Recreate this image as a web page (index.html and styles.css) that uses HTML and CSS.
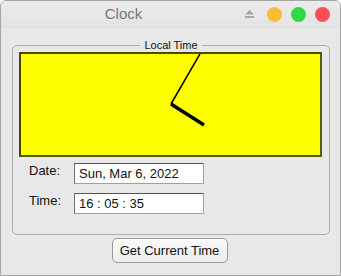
FILE: index.html
```html
<!DOCTYPE html>
<html lang="en">
<head>
    <meta charset="UTF-8">
    <title>Clock</title>
    <link rel="stylesheet" href="styles.css">
</head>
<body>
    <div class="window">
        <div class="titlebar">
            <div class="title">Clock</div>
            <div class="controls">
                <svg class="eject" width="9" height="8" viewBox="0 0 9 8">
                    <polygon points="4.5,0 9,4.5 0,4.5" fill="#a8a8a8"/>
                    <rect x="0" y="6" width="9" height="2" fill="#a8a8a8"/>
                </svg>
                <span class="dot yellow"></span>
                <span class="dot green"></span>
                <span class="dot red"></span>
            </div>
        </div>

        <div class="content">
            <fieldset class="group">
                <legend>Local Time</legend>
                <div class="clock-panel">
                    <svg width="299" height="101" viewBox="0 0 299 101">
                        <line x1="150" y1="50" x2="179.5" y2="-1" stroke="#000" stroke-width="1.5"/>
                        <line x1="150" y1="50" x2="183" y2="71" stroke="#000" stroke-width="3.5"/>
                    </svg>
                </div>
                <div class="row">
                    <label>Date:</label>
                    <div class="field">Sun, Mar 6, 2022</div>
                </div>
                <div class="row">
                    <label>Time:</label>
                    <div class="field">16 : 05 : 35</div>
                </div>
            </fieldset>
            <div class="actions">
                <button class="btn">Get Current Time</button>
            </div>
        </div>
    </div>
</body>
</html>
```

FILE: styles.css
```css
* {
    margin: 0;
    padding: 0;
    box-sizing: border-box;
}

body {
    font-family: 'Liberation Sans', Arial, sans-serif;
    background: #ffffff;
}

.window {
    width: 341px;
    height: 276px;
    border: 1px solid #a4a4a4;
    border-radius: 6px 6px 0 0;
    background: #e8e8e8;
    overflow: hidden;
}

.titlebar {
    height: 27px;
    display: flex;
    align-items: center;
    background: linear-gradient(#ececec, #e3e3e3);
    border-bottom: 1px solid #dedede;
}

.title {
    flex: 1;
    text-align: center;
    font-size: 15px;
    color: #777;
    padding-bottom: 1px;
    padding-left: 1px;
}

.controls {
    display: flex;
    align-items: center;
    gap: 9px;
    padding-right: 10px;
}

.eject {
    margin-right: 4px;
}

.dot {
    width: 15px;
    height: 15px;
    border-radius: 50%;
}

.yellow { background: #fbbd33; }
.green { background: #33d845; }
.red { background: #f65158; }

.content {
    padding: 11px 10px 0 11px;
}

.group {
    height: 196px;
    border: 1px solid #adadad;
    border-radius: 5px;
    padding: 1px 6px 0 6px;
}

.group legend {
    margin: 0 auto;
    padding: 0 4px;
    font-size: 11px;
    color: #111;
}

.clock-panel {
    width: 303px;
    height: 105px;
    background: #ffff00;
    border: 2px solid #4a4a00;
    border-right-color: #5c5c10;
    border-bottom-color: #5c5c10;
}

.clock-panel svg {
    display: block;
}

.row {
    display: flex;
    align-items: flex-start;
    margin-top: 6px;
    margin-left: 10px;
}

.row + .row {
    margin-top: 9px;
}

.row label {
    width: 45px;
    font-size: 13px;
    color: #111;
    margin-top: 0;
}

.field {
    width: 130px;
    height: 21px;
    background: #fff;
    border: 1px solid #a0a0a0;
    border-top-color: #555;
    border-left-color: #707070;
    font-size: 13px;
    color: #111;
    padding: 2px 0 0 4px;
}

.actions {
    display: flex;
    justify-content: center;
    padding-top: 3px;
    padding-right: 3px;
}

.btn {
    width: 116px;
    height: 25px;
    font-family: 'Liberation Sans', Arial, sans-serif;
    font-size: 13px;
    color: #111;
    border: 1px solid #9a9a9a;
    border-radius: 5px;
    background: linear-gradient(#fafafa, #ececec);
}
```
